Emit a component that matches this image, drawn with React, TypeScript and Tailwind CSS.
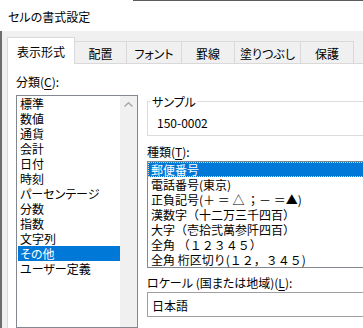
const categories = [
  "標準",
  "数値",
  "通貨",
  "会計",
  "日付",
  "時刻",
  "パーセンテージ",
  "分数",
  "指数",
  "文字列",
  "その他",
  "ユーザー定義",
];

const types = [
  "郵便番号",
  "電話番号(東京)",
  "正負記号(＋ ＝ △ ；－ ＝▲)",
  "漢数字（十二万三千四百）",
  "大字（壱拾弐萬参阡四百）",
  "全角 （１２３４５）",
  "全角 桁区切り(１２，３４５)",
];

const tabs = [
  { label: "配置", w: "w-[52px]" },
  { label: "フォント", w: "w-[55px]" },
  { label: "罫線", w: "w-[53px]" },
  { label: "塗りつぶし", w: "w-[66px]" },
  { label: "保護", w: "w-[53px]" },
];

export default function App() {
  return (
    <div className="w-[363px] h-[328px] overflow-hidden bg-white text-black text-[12px] leading-[15px] font-['Noto_Sans_CJK_JP','Noto_Sans',sans-serif] [font-feature-settings:'palt'] flex flex-col">
      {/* タイトルバー */}
      <div className="h-[31px] shrink-0 flex flex-col">
        <div className="h-px flex">
          <div className="w-[133px]" />
          <div className="flex-1 bg-[#5c5c5c]" />
        </div>
        <div className="flex-1 flex items-center pl-2">セルの書式設定</div>
      </div>

      <div className="flex-1 flex min-h-0">
        <div className="w-[2px] bg-[#6d6d6d]" />
        <div className="flex-1 flex flex-col bg-[#f0f0f0] min-w-0">
          {/* タブ */}
          <div className="h-[33px] shrink-0 flex items-end">
            <div className="w-[5px] h-[23px]" />
            <div className="w-[68px] h-[27px] bg-white border-l border-t border-r border-[#d9d9d9] flex items-center justify-center">
              表示形式
            </div>
            {tabs.map((t) => (
              <div
                key={t.label}
                className={`${t.w} h-[23px] shrink-0 border-t border-r border-b border-[#d9d9d9] flex items-center justify-center pt-px`}
              >
                {t.label}
              </div>
            ))}
            <div className="flex-1 h-[23px] border-b border-[#d9d9d9]" />
          </div>

          {/* タブページ */}
          <div className="flex-1 flex ml-[5px] bg-white border-l border-[#d9d9d9] min-h-0 pl-2">
            {/* 分類 */}
            <div className="w-[122px] shrink-0 flex flex-col pt-[10px]">
              <p>
                分類(<span className="underline underline-offset-2">C</span>):
              </p>
              <div className="mt-[6px] flex-1 flex border border-[#828790] h-[300px]">
                <ul className="flex-1 pl-px">
                  {categories.map((c) => (
                    <li
                      key={c}
                      className={`h-[15px] pl-[2px] whitespace-nowrap ${
                        c === "その他" ? "bg-[#0078d7] text-white" : ""
                      }`}
                    >
                      {c}
                    </li>
                  ))}
                </ul>
                <div className="w-[17px] bg-[#f0f0f0] flex justify-center pt-[6px]">
                  <svg width="9" height="5" viewBox="0 0 9 5">
                    <path
                      d="M0.5 4.5 L4.5 0.8 L8.5 4.5"
                      fill="none"
                      stroke="#a6a6a6"
                      strokeWidth="1.4"
                    />
                  </svg>
                </div>
              </div>
            </div>

            {/* 右側 */}
            <div className="w-[240px] shrink-0 ml-[9px] pt-[30px] flex flex-col">
              <fieldset className="border border-[#dcdcdc] pl-[9px] pb-[5px]">
                <legend className="ml-[-6px] px-px">サンプル</legend>
                <div className="pt-[6px]">150-0002</div>
              </fieldset>

              <p className="mt-[8px]">
                種類(<span className="underline underline-offset-2">T</span>):
              </p>
              <ul className="mt-[2px] border border-[#828790] [font-feature-settings:normal]">
                {types.map((t, i) => (
                  <li
                    key={t}
                    className={`h-[15px] whitespace-nowrap ${
                      i === 0
                        ? "bg-[#0078d7] text-white border border-dotted border-[#f3d2a4] pl-[2px] leading-[13px]"
                        : "pl-[3px]"
                    }`}
                  >
                    {t}
                  </li>
                ))}
              </ul>

              <p className="mt-[7px] whitespace-nowrap">
                ロケール (国または地域)(
                <span className="underline underline-offset-2">L</span>):
              </p>
              <div className="mt-[2px] h-[25px] border border-[#a0a0a0] pl-[4px] pt-[5px]">
                日本語
              </div>
            </div>
          </div>
        </div>
      </div>
    </div>
  );
}
